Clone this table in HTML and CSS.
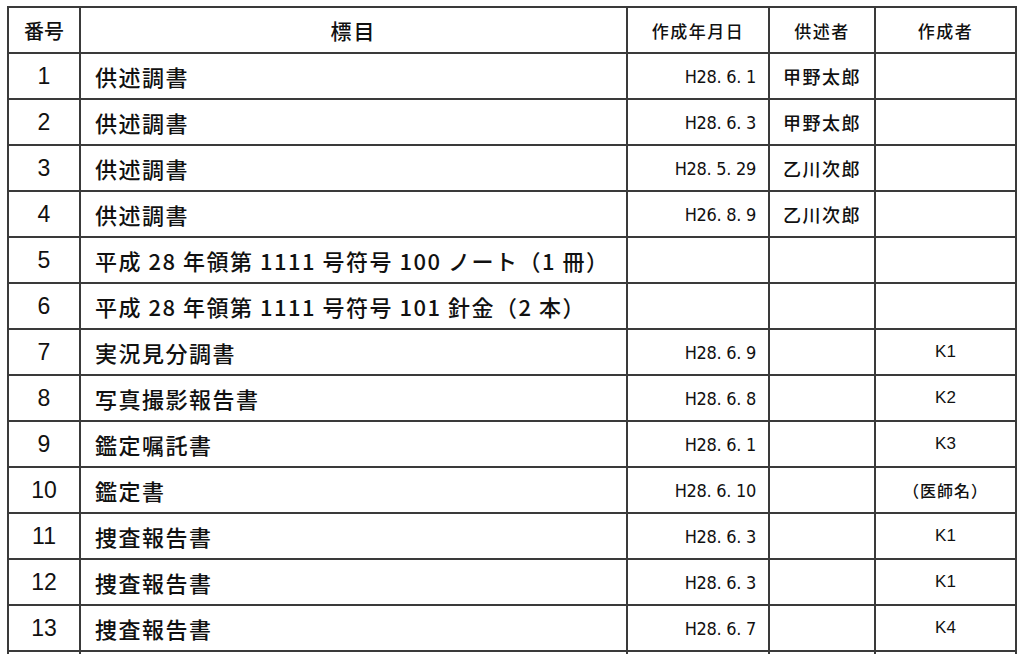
FILE: index.html
```html
<!DOCTYPE html>
<html lang="ja">
<head>
<meta charset="utf-8">
<link rel="stylesheet" href="styles.css">
</head>
<body>
<table class="list">
  <colgroup>
    <col class="c-no"><col class="c-title"><col class="c-date"><col class="c-person"><col class="c-author">
  </colgroup>
  <thead>
    <tr>
      <th class="h-no">番号</th>
      <th class="h-title">標目</th>
      <th class="h-small">作成年月日</th>
      <th class="h-small">供述者</th>
      <th class="h-small">作成者</th>
    </tr>
  </thead>
  <tbody>
    <tr><td class="no">1</td><td class="title">供述調書</td><td class="date">H28. 6. 1</td><td class="person">甲野太郎</td><td class="author"></td></tr>
    <tr><td class="no">2</td><td class="title">供述調書</td><td class="date">H28. 6. 3</td><td class="person">甲野太郎</td><td class="author"></td></tr>
    <tr><td class="no">3</td><td class="title">供述調書</td><td class="date">H28. 5. 29</td><td class="person">乙川次郎</td><td class="author"></td></tr>
    <tr><td class="no">4</td><td class="title">供述調書</td><td class="date">H26. 8. 9</td><td class="person">乙川次郎</td><td class="author"></td></tr>
    <tr><td class="no">5</td><td class="title">平成 28 年領第 1111 号符号 100 ノート（1 冊）</td><td class="date"></td><td class="person"></td><td class="author"></td></tr>
    <tr><td class="no">6</td><td class="title">平成 28 年領第 1111 号符号 101 針金（2 本）</td><td class="date"></td><td class="person"></td><td class="author"></td></tr>
    <tr><td class="no">7</td><td class="title">実況見分調書</td><td class="date">H28. 6. 9</td><td class="person"></td><td class="author">K1</td></tr>
    <tr><td class="no">8</td><td class="title">写真撮影報告書</td><td class="date">H28. 6. 8</td><td class="person"></td><td class="author">K2</td></tr>
    <tr><td class="no">9</td><td class="title">鑑定嘱託書</td><td class="date">H28. 6. 1</td><td class="person"></td><td class="author">K3</td></tr>
    <tr><td class="no">10</td><td class="title">鑑定書</td><td class="date">H28. 6. 10</td><td class="person"></td><td class="author jp">（医師名）</td></tr>
    <tr><td class="no">11</td><td class="title">捜査報告書</td><td class="date">H28. 6. 3</td><td class="person"></td><td class="author">K1</td></tr>
    <tr><td class="no">12</td><td class="title">捜査報告書</td><td class="date">H28. 6. 3</td><td class="person"></td><td class="author">K1</td></tr>
    <tr><td class="no">13</td><td class="title">捜査報告書</td><td class="date">H28. 6. 7</td><td class="person"></td><td class="author">K4</td></tr>
    <tr class="tail"><td></td><td></td><td></td><td></td><td></td></tr>
  </tbody>
</table>
</body>
</html>
```

FILE: styles.css
```css
html, body {
  margin: 0;
  padding: 0;
  background: #ffffff;
  overflow: hidden;
}
body {
  padding: 6px 8px 0 7px;
  font-family: "Noto Sans CJK JP", "Liberation Sans", sans-serif;
  color: #111;
}
.list {
  border-collapse: collapse;
  table-layout: fixed;
  width: 1008px;
}
.c-no { width: 72px; }
.c-title { width: 547px; }
.c-date { width: 142px; }
.c-person { width: 106px; }
.c-author { width: 141px; }

.list th, .list td {
  border: 2px solid #3a3a3a;
  height: 44px;
  padding: 0;
  vertical-align: middle;
  font-weight: 500;
  white-space: nowrap;
  overflow: hidden;
}
.list .tail td {
  height: 2px;
  border-bottom: 0;
}
.h-no {
  font-size: 20px;
}
.h-title {
  font-size: 21px;
  letter-spacing: 2px;
}
.h-small {
  font-size: 17px;
  letter-spacing: 1.5px;
}
.no {
  text-align: center;
  font-family: "Liberation Sans", sans-serif;
  font-size: 23px;
}
.title {
  padding-left: 14px !important;
  font-size: 22px;
  letter-spacing: 1.5px;
}
.date {
  text-align: right;
  padding-right: 12px !important;
  font-family: "DejaVu Sans Condensed", "DejaVu Sans", sans-serif;
  font-stretch: condensed;
  font-size: 18px;
  letter-spacing: -0.3px;
}
.person {
  text-align: center;
  font-size: 18px;
  letter-spacing: 1.5px;
}
.author {
  text-align: center;
  font-family: "Liberation Sans", sans-serif;
  font-size: 17px;
}
.author.jp {
  font-family: "Noto Sans CJK JP", sans-serif;
  font-size: 16px;
  letter-spacing: 1px;
}
```
